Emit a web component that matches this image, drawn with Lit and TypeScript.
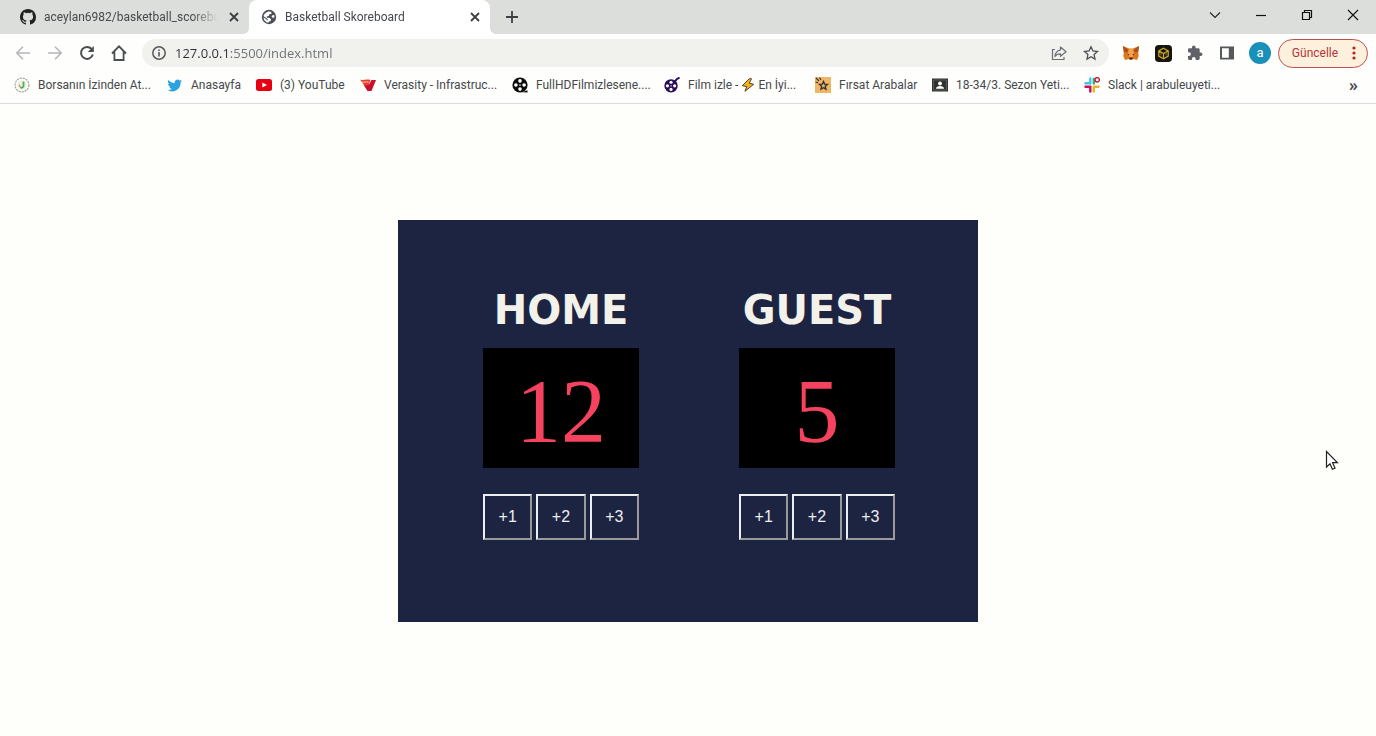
import { LitElement, html, css, svg, TemplateResult } from "lit";
import { customElement, property, state } from "lit/decorators.js";
import { classMap } from "lit/directives/class-map.js";

const icon = (body: TemplateResult, size = 16, box = 16) =>
  html`<svg width=${size} height=${size} viewBox="0 0 ${box} ${box}" aria-hidden="true">${body}</svg>`;

const reelSpokes = (color: string) => svg`
  <circle cx="8" cy="8" r="7.6" fill=${color}/>
  <circle cx="8" cy="3.9" r="1.8" fill="#fff"/><circle cx="8" cy="12.1" r="1.8" fill="#fff"/>
  <circle cx="3.9" cy="8" r="1.8" fill="#fff"/><circle cx="12.1" cy="8" r="1.8" fill="#fff"/>
  <circle cx="8" cy="8" r=".8" fill="#fff"/>`;

const icons = {
  github: icon(svg`<path fill="#222" fill-rule="evenodd" d="M8 0C3.58 0 0 3.58 0 8c0 3.54 2.29 6.53 5.47 7.59.4.07.55-.17.55-.38 0-.19-.01-.82-.01-1.49-2.01.37-2.53-.49-2.69-.94-.09-.23-.48-.94-.82-1.13-.28-.15-.68-.52-.01-.53.63-.01 1.08.58 1.23.82.72 1.21 1.87.87 2.33.66.07-.52.28-.87.51-1.07-1.78-.2-3.64-.89-3.64-3.95 0-.87.31-1.59.82-2.15-.08-.2-.36-1.02.08-2.12 0 0 .67-.21 2.2.82a7.6 7.6 0 0 1 4 0c1.53-1.04 2.2-.82 2.2-.82.44 1.1.16 1.92.08 2.12.51.56.82 1.27.82 2.15 0 3.07-1.87 3.75-3.65 3.95.29.25.54.73.54 1.48 0 1.07-.01 1.93-.01 2.2 0 .21.15.46.55.38A8.01 8.01 0 0 0 16 8c0-4.42-3.58-8-8-8z"/>`),
  globe: icon(svg`<circle cx="8" cy="8" r="7.200" fill="#4d5156"/><path fill="#fff" d="M9 2.500l1.600.9-.4 1.600-1.900.3-.5 1.700-2.200.4.400 1.400 2.800.200 1.300 1.500-.5 1.500-1.500.6-.9 1.200C4.300 13.200 2.500 11 2.500 8.600L5 10l1 1.600.8-.3L6.300 9.800 4.500 8.400 2.600 7.200C2.900 4.800 5.500 2.300 9 2.500zM11.600 6.200l1.600-.2.3 2.500-2 .3-1-1.500z"/>`),
  close: icon(svg`<path d="M4 4l8 8M12 4l-8 8" stroke="#3c4043" stroke-width="1.8" fill="none"/>`),
  plus: icon(svg`<path d="M8 2v12M2 8h12" stroke="#3c4043" stroke-width="1.8"/>`),
  chevron: icon(svg`<path d="M3 5.500l5 5 5-5" stroke="#222" stroke-width="1.100" fill="none"/>`),
  minimize: icon(svg`<path d="M3 8.500h10" stroke="#111" stroke-width="1.200"/>`),
  restore: icon(svg`<path d="M3.500 5.500h7v7h-7zM5.500 5V3.500h7v7H11" stroke="#111" stroke-width="1.200" fill="none"/>`),
  shut: icon(svg`<path d="M3 3l10 10M13 3L3 13" stroke="#111" stroke-width="1.100"/>`),
  back: icon(svg`<path d="M15 8H2M8 1.800L1.800 8 8 14.200" stroke="#b5b7bb" stroke-width="1.600" fill="none"/>`),
  forward: icon(svg`<path d="M1 8h13M8 1.800L14.200 8 8 14.200" stroke="#b5b7bb" stroke-width="1.600" fill="none"/>`),
  reload: icon(svg`<path d="M13.800 9.500A6 6 0 1 1 12.600 4" stroke="#4a4d51" stroke-width="2" fill="none"/><path d="M14.800 1v6H8.800z" fill="#4a4d51"/>`),
  home: icon(svg`<path d="M1 8.500L8 1.300l7 7.200M3.400 6.800V15h9.200V6.800" stroke="#4a4d51" stroke-width="1.800" fill="none"/>`),
  info: icon(svg`<circle cx="8" cy="8" r="6.200" stroke="#55585c" stroke-width="1.500" fill="none"/><path d="M8 7v4.400M8 4.400v1.700" stroke="#55585c" stroke-width="1.600"/>`),
  share: icon(svg`<path d="M4 4.500H1.500v10h11.500V12" stroke="#6b6e72" stroke-width="1.200" fill="none"/><path d="M9.500 2l5.500 4.700-5.500 4.600V8.800C7 8.700 5.200 9.600 4 11.500c.2-3.500 2-6 5.500-6.700z" stroke="#6b6e72" stroke-width="1.200" fill="none" stroke-linejoin="round"/>`),
  star: icon(svg`<path d="M8 1.800l1.900 4.200 4.600.5-3.400 3.100.9 4.500L8 11.800l-4 2.300.9-4.500L1.500 6.500l4.600-.5z" stroke="#4d5054" stroke-width="1.300" fill="none"/>`),
  fox: icon(svg`<path fill="#e2761b" d="M0 1l6 2.500h4L16 1l-.8 6 .5 4-1.700 4-3.600-1-1.400 1H7l-1.400-1L2 15l-1.700-4 .5-4z"/><path fill="#a8501c" d="M0 1l5.500 4L4 7.500.8 7zM16 1l-5.500 4L12 7.500l3.200-.5z"/><path fill="#f6a04d" d="M6 4h4l1 5-1.500 3h-3L5 9z"/><path fill="#2b2b33" d="M4.300 8.600l2.200 1-.8.900zM11.700 8.600l-2.200 1 .8.900zM6.600 12.500h2.800l.3 1.800H6.300z"/>`),
  cube: icon(svg`<rect width="18" height="18" rx="4" fill="#16150f"/><path d="M9 3.500l5 2.700v5.600l-5 2.900-5-2.900V6.200zM4 6.200l5 2.800 5-2.800M9 9v5.700" fill="none" stroke="#c9a92c" stroke-width="1.300"/><path d="M6.300 7.600v3.500M11.700 7.600v3.500" stroke="#8d7722"/>`, 17, 18),
  puzzle: icon(svg`<path fill="#5f6368" d="M13.700 7.400h-1V4.700c0-.8-.6-1.400-1.400-1.400H8.600v-1a1.800 1.800 0 0 0-3.600 0v1H2.300C1.500 3.300 1 3.900 1 4.700v2.500h1a1.900 1.900 0 0 1 0 3.800H1v2.600c0 .8.500 1.400 1.300 1.400h2.600v-1a1.900 1.900 0 0 1 3.800 0v1h2.600c.8 0 1.400-.6 1.400-1.400V11h1a1.800 1.800 0 0 0 0-3.600z"/>`),
  panel: icon(svg`<path fill="#55585c" fill-rule="evenodd" d="M1 1.500h14v13H1zM3 3.300v9.400h6.800V3.300z"/>`),
  dots: icon(svg`<circle cx="8" cy="3" r="1.600" fill="#b3261e"/><circle cx="8" cy="8" r="1.600" fill="#b3261e"/><circle cx="8" cy="13" r="1.600" fill="#b3261e"/>`),
  borsa: icon(svg`<circle cx="8" cy="8" r="6.900" fill="#fff" stroke="#a5a59e" stroke-width="1.200" stroke-dasharray="2.200 .8"/><circle cx="8" cy="8" r="4.800" fill="#eef0e6"/><path d="M9.500 4.500v4.700a2 2 0 0 1-3.300 1" stroke="#55b04c" stroke-width="1.800" fill="none"/><path d="M5 7.800l1.200 2" stroke="#e46a5a" stroke-width="1.200"/>`),
  twitter: icon(svg`<path fill="#2aa3e0" d="M15 3.900a6 6 0 0 1-1.700.5c.6-.4 1.100-1 1.300-1.600-.6.300-1.200.6-1.900.7a3 3 0 0 0-5.100 2.700C5.200 6.100 3 4.900 1.500 3.100a3 3 0 0 0 .9 4 3 3 0 0 1-1.300-.4c0 1.400 1 2.700 2.400 3-.4.1-.9.1-1.300 0 .4 1.200 1.500 2.100 2.800 2.100A6 6 0 0 1 .6 13a8.500 8.500 0 0 0 13-7.600c.5-.4 1-.9 1.400-1.500z"/>`),
  youtube: icon(svg`<rect y="2" width="16" height="12" rx="2.500" fill="#e60012"/><path d="M6.300 5.400v5.200L11 8z" fill="#fff"/>`),
  verasity: icon(svg`<path fill="#c8102e" d="M6 6l3 1.500L11.500 3H16l-4.500 11H7.500L4 8.500z"/><path fill="#e5402c" d="M0 2.500c3 1.500 6-1 10.500.5L8.500 8 4.500 9 2.500 6z"/><path d="M2 5c2.500.8 4-.6 6.500 0" stroke="#fff" stroke-width=".7" fill="none"/>`),
  reel: icon(svg`${reelSpokes("#0c0c0c")}<path d="M10 15.300l5.500-2v2.300z" fill="#0c0c0c"/>`),
  reelPurple: icon(svg`<g transform="translate(0 1.800) scale(.88)">${reelSpokes("#2a0d57")}</g><path d="M11 4.500c1-2 2.300-3.300 4.600-3.700" stroke="#2a0d57" stroke-width="2" fill="none"/>`),
  firsat: icon(svg`<rect width="16" height="16" fill="#f0b565"/><path d="M8.500 4.500l1.100 2.600 2.900.3-2.200 1.900.6 2.900-2.400-1.500-2.500 1.500.6-2.900-2.100-1.900 2.900-.3z" fill="none" stroke="#333" stroke-width="1.400"/><path d="M1 1l3 3M4.500.5L6 3M.5 5l2.500.8" stroke="#333" stroke-width="1.100"/>`),
  classroom: icon(svg`<path d="M0 1.500h16v13H0z" fill="#2f3331"/><path d="M1.500 3h13v10h-13z" fill="none" stroke="#5b5f57"/><circle cx="8" cy="6.500" r="1.900" fill="#fff"/><path d="M4 11.800c0-3.600 8-3.600 8 0z" fill="#fff"/>`),
  slack: icon(svg`<path d="M6.300 1.500v5M1.500 6.300h4" stroke="#42c3ef" stroke-width="2.400" stroke-linecap="round"/><path d="M9.800 2v4.500" stroke="#2eb67d" stroke-width="2.400" stroke-linecap="round"/><path d="M1.500 9.800h5M6.300 10v4.500" stroke="#d0104c" stroke-width="2.400" stroke-linecap="round"/><path d="M10 9.800h4.500M9.800 10v4.500" stroke="#e9b22f" stroke-width="2.400" stroke-linecap="round"/><circle cx="13.200" cy="2.800" r="2.200" fill="#fff" stroke="#c8102e" stroke-width="1.300"/>`),
  bolt: icon(svg`<path d="M9.500.8L1.500 8.800l5 1L4.500 15.200l10-8-5-1.200L12 .8z" fill="#f6b21b" stroke="#3a3020" stroke-width="1"/>`, 14),
};

interface Bookmark {
  icon: TemplateResult;
  label: string | TemplateResult;
  width: number;
}

const bookmarks: Bookmark[] = [
  { icon: icons.borsa, label: "Borsanın İzinden At...", width: 113 },
  { icon: icons.twitter, label: "Anasayfa", width: 49 },
  { icon: icons.youtube, label: "(3) YouTube", width: 64 },
  { icon: icons.verasity, label: "Verasity - Infrastruc...", width: 112 },
  { icon: icons.reel, label: "FullHDFilmizlesene....", width: 112 },
  { icon: icons.reelPurple, label: html`Film izle - ${icons.bolt} En İyi...`, width: 111 },
  { icon: icons.firsat, label: "Fırsat Arabalar", width: 77 },
  { icon: icons.classroom, label: "18-34/3. Sezon Yeti...", width: 112 },
  { icon: icons.slack, label: "Slack | arabuleuyeti...", width: 112 },
];

@customElement("browser-tab")
class BrowserTab extends LitElement {
  @property() label = "";
  @property({ type: Boolean }) active = false;
  @property({ attribute: false }) favicon?: TemplateResult;

  static styles = css`
    :host { display: block; }
    .tab {
      box-sizing: border-box;
      position: relative;
      display: flex;
      align-items: center;
      gap: 8px;
      width: 241px;
      height: 34px;
      padding: 0 7px 0 12px;
      border-radius: 8px 8px 0 0;
      color: #45484c;
    }
    .active { background: #fff; }
    .active::before,
    .active::after {
      content: "";
      position: absolute;
      bottom: 0;
      width: 6px;
      height: 6px;
    }
    .active::before { right: 100%; background: radial-gradient(circle at 0 0, transparent 6px, #fff 6px); }
    .active::after { left: 100%; background: radial-gradient(circle at 100% 0, transparent 6px, #fff 6px); }
    .label {
      flex: 1;
      min-width: 0;
      white-space: nowrap;
      mask-image: linear-gradient(90deg, #000 85%, transparent);
    }
    .close { display: flex; padding: 0; border: 0; background: none; }
    svg { display: block; flex: none; }
  `;

  render() {
    return html`<div class=${classMap({ tab: true, active: this.active })}>
      ${this.favicon}
      <span class="label">${this.label}</span>
      <button class="close" aria-label="Sekmeyi kapat">${icons.close}</button>
    </div>`;
  }
}

@customElement("team-score")
class TeamScore extends LitElement {
  @property() name = "";
  @property({ type: Number }) score = 0;

  static styles = css`
    :host { display: block; width: 156px; }
    .name {
      display: flex;
      justify-content: center;
      margin: 0 0 14px;
      color: #f2f2ea;
      font: bold 40px/48px Verdana, "DejaVu Sans", sans-serif;
    }
    .score {
      display: block;
      padding-top: 8px;
      background: #000;
      color: #f5435f;
      font: 90px/112px "Liberation Serif", serif;
      text-align: center;
    }
    .points { display: flex; gap: 4px; margin-top: 26px; }
    .add {
      flex: 1;
      height: 46px;
      padding: 0;
      border: 2px outset #eee;
      background: none;
      color: #eee;
      font: 16px/20px "Liberation Sans", Arial, sans-serif;
    }
  `;

  render() {
    return html`
      <h1 class="name">${this.name}</h1>
      <output class="score">${this.score}</output>
      <div class="points">
        ${[1, 2, 3].map(
          (n) => html`<button class="add" @click=${() => (this.score += n)}>+${n}</button>`
        )}
      </div>`;
  }
}

@customElement("app-root")
class AppRoot extends LitElement {
  @state() private address = "127.0.0.1:5500/index.html";

  static styles = css`
    :host {
      position: relative;
      display: flex;
      flex-direction: column;
      min-height: 100vh;
      background: #fefefb;
      color: #45484c;
      font: 12px/16px "Segoe UI", Roboto, sans-serif;
    }
    button, input { font: inherit; color: inherit; }
    button { display: flex; align-items: center; justify-content: center; padding: 0; border: 0; background: none; }
    svg { display: block; flex: none; }

    .strip { display: flex; height: 34px; padding-left: 8px; background: #dcdedb; }
    .new-tab { width: 28px; margin-left: 8px; }
    .window { display: flex; height: 29px; margin-left: auto; }
    .window button { width: 46px; }

    .toolbar { display: flex; align-items: center; height: 38px; padding: 0 8px 0 7px; background: #fefefc; }
    .toolbar > .nav { width: 32px; height: 28px; }
    .address {
      flex: 1;
      display: flex;
      align-items: center;
      gap: 8px;
      height: 28px;
      margin: 0 6px 0 7px;
      padding: 0 10px 0 9px;
      border-radius: 14px;
      background: #f1f2ee;
    }
    .address button { width: 16px; margin-left: 8px; }
    .address .info { margin: 0; }
    .url {
      flex: 1;
      min-width: 0;
      padding: 0;
      border: 0;
      outline: 0;
      font: 13px/20px "Segoe UI", "Open Sans", sans-serif;
      background: linear-gradient(90deg, #2d3033 54px, #6c7075 54px);
      background-clip: text;
      -webkit-text-fill-color: transparent;
    }
    .avatar {
      width: 22px;
      height: 22px;
      margin: 0 7px 0 6px;
      border-radius: 50%;
      background: #1a8fb8;
      color: #fff;
      font-size: 13px;
    }
    .update {
      box-sizing: border-box;
      gap: 8px;
      width: 90px;
      height: 29px;
      padding-left: 8px;
      border: 1px solid #c0504f;
      border-radius: 15px;
      background: #fdf0dc;
      color: #b3363a;
    }

    .bookmarks {
      display: flex;
      gap: 16px;
      height: 26px;
      padding: 0 18px 5px 14px;
      border-bottom: 1px solid #dcdcd8;
      background: #fefefc;
    }
    .bookmark { display: flex; align-items: center; gap: 8px; color: inherit; text-decoration: none; }
    .text { display: flex; align-items: center; gap: 3px; white-space: nowrap; }
    .more { margin-left: auto; font: 600 16px/16px "Open Sans", sans-serif; }

    .page { flex: 1; display: flex; align-items: center; justify-content: center; padding-top: 2px; }
    .board {
      box-sizing: border-box;
      display: flex;
      justify-content: space-between;
      width: 580px;
      max-width: 100%;
      padding: 66px 83px 82px 85px;
      background: #1c2442;
    }
    .pointer { position: absolute; left: 1325px; top: 450px; }
  `;

  render() {
    return html`
      <div class="strip">
        <browser-tab label="aceylan6982/basketball_scorebo" .favicon=${icons.github}></browser-tab>
        <browser-tab label="Basketball Skoreboard" active .favicon=${icons.globe}></browser-tab>
        <button class="new-tab" aria-label="Yeni sekme">${icons.plus}</button>
        <div class="window">
          <button aria-label="Sekme ara">${icons.chevron}</button>
          <button aria-label="Simge durumuna küçült">${icons.minimize}</button>
          <button aria-label="Geri yükle">${icons.restore}</button>
          <button aria-label="Kapat">${icons.shut}</button>
        </div>
      </div>
      <div class="toolbar">
        <button class="nav" aria-label="Geri">${icons.back}</button>
        <button class="nav" aria-label="İleri">${icons.forward}</button>
        <button class="nav" aria-label="Yeniden yükle">${icons.reload}</button>
        <button class="nav" aria-label="Ana sayfa">${icons.home}</button>
        <div class="address">
          <button class="info" aria-label="Site bilgileri">${icons.info}</button>
          <input class="url" aria-label="Adres" .value=${this.address}
            @change=${(e: Event) => (this.address = (e.target as HTMLInputElement).value)}>
          <button aria-label="Paylaş">${icons.share}</button>
          <button aria-label="Yer işareti">${icons.star}</button>
        </div>
        <button class="nav" aria-label="MetaMask">${icons.fox}</button>
        <button class="nav" aria-label="Cüzdan">${icons.cube}</button>
        <button class="nav" aria-label="Uzantılar">${icons.puzzle}</button>
        <button class="nav" aria-label="Yan panel">${icons.panel}</button>
        <button class="avatar" aria-label="Profil">a</button>
        <button class="update">Güncelle ${icons.dots}</button>
      </div>
      <nav class="bookmarks">
        ${bookmarks.map(
          (b) => html`<a class="bookmark" href="#">${b.icon}<span class="text" style="width:${b.width}px">${b.label}</span></a>`
        )}
        <button class="more" aria-label="Diğer yer işaretleri">»</button>
      </nav>
      <main class="page">
        <section class="board">
          <team-score name="HOME" score="12"></team-score>
          <team-score name="GUEST" score="5"></team-score>
        </section>
      </main>
      <svg class="pointer" width="14" height="21" viewBox="0 0 14 21" aria-hidden="true">
        <path d="M1.500 1.500v15.500l3.500-3.300 2.400 5.600 2.600-1.100-2.400-5.500h4.800z" fill="#fff" stroke="#222" stroke-width="1.200"/>
      </svg>`;
  }
}
